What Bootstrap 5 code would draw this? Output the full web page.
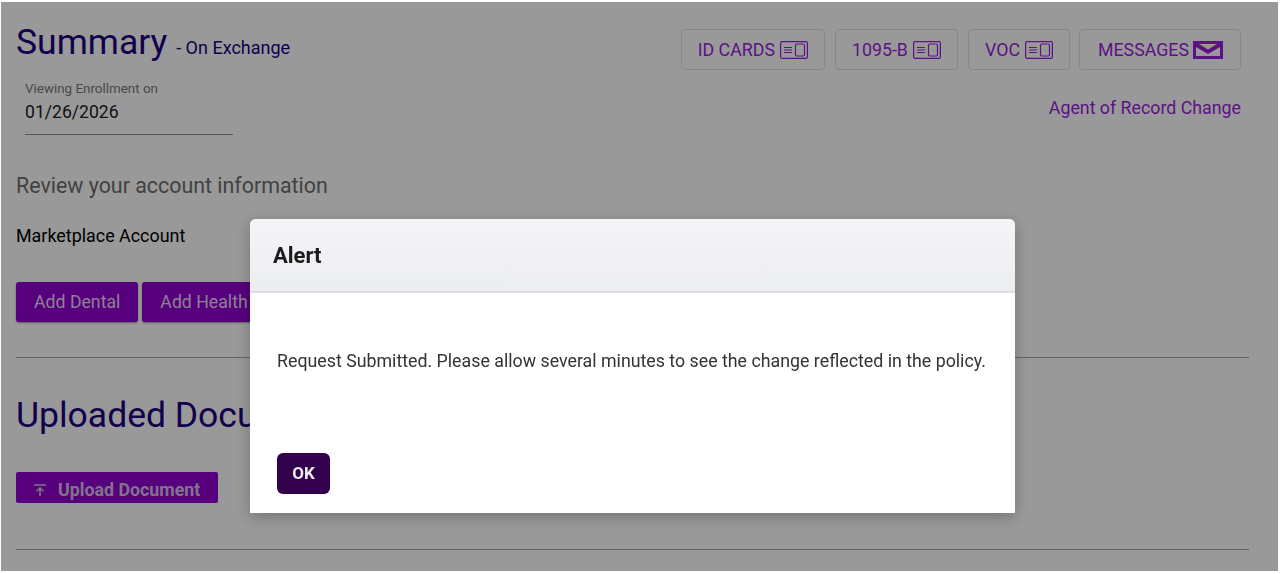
<!DOCTYPE html>
<html lang="en">
<head>
  <meta charset="UTF-8">
  <meta name="viewport" content="width=device-width, initial-scale=1.0">
  <title>Summary</title>
  <link href="https://cdn.jsdelivr.net/npm/bootstrap@5.3.0/dist/css/bootstrap.min.css" rel="stylesheet">
  <style>
    html, body { height: 100%; overflow: hidden; }
    body { font-family: Roboto, "Liberation Sans", sans-serif; background: #fff; color: #000; }
    .page-wrap { height: 574px; padding: 24px 31px 0 16px; }
    .page-title { font-size: 35.5px; line-height: 36px; font-weight: 400; color: #200080; margin: 0; }
    .title-sub { font-size: 18px; color: #200080; }
    .top-head { height: 88px; }
    .date-box { width: 208px; margin: 15px 0 0 9px; border-bottom: 1px solid #8f8f8f; height: 54px; }
    .date-label { font-size: 13.4px; line-height: 16px; color: #7a7a7a; }
    .date-value { font-size: 17.6px; line-height: 30px; color: #222; }
    .head-links { padding: 5px 8px 0 0; }
    .head-btns { gap: 10px; }
    .head-btn { height: 41px; padding: 1px 16px 0; border: 1px solid #e2e2e2; border-radius: 4px; background: #fff; color: #9a1ee0; font-size: 17.8px; display: flex; align-items: center; gap: 5px; }
    .head-btn svg { margin-top: -1px; }
    .msg-btn { padding-left: 18px; padding-right: 17px; gap: 4px; margin-left: -1px; }
    .agent-link { color: #9a1ee0; font-size: 17.8px; text-decoration: none; margin-top: 25px; }
    .review-title { font-size: 21.4px; line-height: 24px; color: #6e6e6e; margin: 62px 0 0; font-weight: 400; }
    .market-label { font-size: 17.9px; line-height: 20px; margin: 28px 0 36px; }
    .action-btn { height: 40px; padding: 0 18px; background: #9000d0; color: #e8d8f4; border: 0; border-radius: 3px; font-size: 17.7px; box-shadow: 0 1px 2px rgba(0,0,0,.4); }
    .section-rule { border-top: 1px solid #000; opacity: .35; margin: 35px 0 39px; }
    .upload-btn { width: 202px; height: 31px; padding: 5px 0 0 17px; margin-top: 39px; background: #9000d0; color: #d8c0ea; border: 0; border-radius: 2px; font-size: 17.8px; font-weight: 700; display: flex; align-items: center; gap: 11px; }
    .last-rule { margin: 46px 0 0; }
    .modal-backdrop.dim-layer { inset: 2px 2px 3px 1px; width: auto; height: auto; opacity: .4; }
    .alert-dialog { width: 765px; max-width: 765px; margin: 219px 0 0 250px; }
    .alert-box { height: 294px; border: 0; border-radius: 6px 6px 0 0; box-shadow: 0 4px 16px rgba(0,0,0,.25); }
    .alert-head { height: 74px; padding: 0 23px; background: linear-gradient(#f5f5f8, #ecedf1); border-bottom: 2px solid #dfdfe3; border-radius: 6px 6px 0 0; }
    .alert-head .modal-title { font-size: 22px; font-weight: 700; color: #1b1b1b; }
    .alert-body { flex: 0 0 160px; padding: 56px 27px 0; font-size: 17.8px; line-height: 24px; color: #333; white-space: nowrap; }
    .ok-btn { width: 53px; height: 41px; margin-left: 27px; padding: 0; background: #33004d; color: #eee; border: 0; border-radius: 6px; font-size: 17px; font-weight: 700; }
  </style>
</head>
<body>

  <!-- Page behind the dialog -->
  <div class="page-wrap">
    <div class="d-flex justify-content-between top-head">
      <div>
        <h1 class="page-title">Summary <span class="title-sub">- On Exchange</span></h1>
        <div class="date-box">
          <div class="date-label">Viewing Enrollment on</div>
          <div class="date-value">01/26/2026</div>
        </div>
      </div>
      <div class="d-flex flex-column align-items-end head-links">
        <div class="d-flex head-btns">
          <button class="head-btn">ID CARDS
            <svg width="28" height="18" viewBox="0 0 28 18" fill="none" stroke="currentColor" stroke-width="1.2"><rect x=".6" y=".6" width="26.8" height="16.8" rx="1.5"/><path d="M4 6.5h8M4 9h8M4 11.5h8"/><rect x="15.5" y="3" width="9" height="12" rx="1.5"/></svg>
          </button>
          <button class="head-btn">1095-B
            <svg width="28" height="18" viewBox="0 0 28 18" fill="none" stroke="currentColor" stroke-width="1.2"><rect x=".6" y=".6" width="26.8" height="16.8" rx="1.5"/><path d="M4 6.5h8M4 9h8M4 11.5h8"/><rect x="15.5" y="3" width="9" height="12" rx="1.5"/></svg>
          </button>
          <button class="head-btn">VOC
            <svg width="28" height="18" viewBox="0 0 28 18" fill="none" stroke="currentColor" stroke-width="1.2"><rect x=".6" y=".6" width="26.8" height="16.8" rx="1.5"/><path d="M4 6.5h8M4 9h8M4 11.5h8"/><rect x="15.5" y="3" width="9" height="12" rx="1.5"/></svg>
          </button>
          <button class="head-btn msg-btn">MESSAGES
            <svg width="30" height="18" viewBox="0 0 30 18"><path fill="currentColor" d="M0 0h30v18H0z"/><path fill="#fff" d="M3 6v9h24V6L15 13zM6 3l9 5.5L24 3z"/></svg>
          </button>
        </div>
        <a href="#" class="agent-link">Agent of Record Change</a>
      </div>
    </div>

    <h2 class="review-title">Review your account information</h2>
    <p class="market-label">Marketplace Account</p>
    <div class="d-flex gap-1">
      <button class="action-btn">Add Dental</button>
      <button class="action-btn">Add Health</button>
    </div>
    <hr class="section-rule">
    <h1 class="page-title">Uploaded Documents</h1>
    <button class="upload-btn">
      <svg width="14" height="14" viewBox="0 0 14 14" fill="none" stroke="currentColor" stroke-width="1.6"><path d="M1 2h12M7 13V5M3.5 8.2 7 4.8l3.5 3.4"/></svg>
      Upload Document
    </button>
    <hr class="section-rule last-rule">
  </div>

  <!-- Alert dialog -->
  <div class="modal-backdrop dim-layer"></div>
  <div class="modal d-block">
    <div class="modal-dialog alert-dialog">
      <div class="modal-content alert-box">
        <div class="modal-header alert-head">
          <h5 class="modal-title">Alert</h5>
        </div>
        <div class="modal-body alert-body">Request Submitted. Please allow several minutes to see the change reflected in the policy.</div>
        <div><button class="ok-btn">OK</button></div>
      </div>
    </div>
  </div>

  <script src="https://cdn.jsdelivr.net/npm/bootstrap@5.3.0/dist/js/bootstrap.bundle.min.js"></script>
</body>
</html>
